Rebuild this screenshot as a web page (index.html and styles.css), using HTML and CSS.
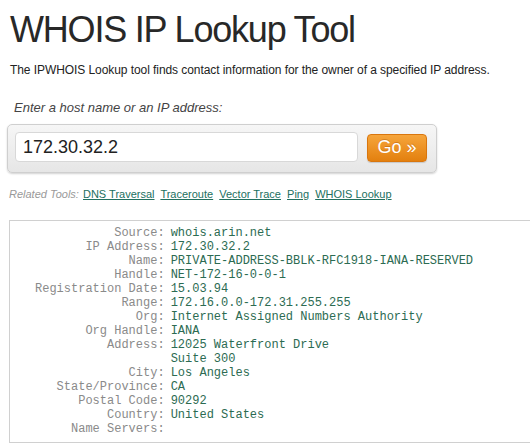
FILE: index.html
```html
<!DOCTYPE html>
<html>
<head>
<meta charset="utf-8">
<link rel="stylesheet" href="styles.css">
</head>
<body>
<h1 class="title">WHOIS IP Lookup Tool</h1>
<p class="desc">The IPWHOIS Lookup tool finds contact information for the owner of a specified IP address.</p>
<p class="prompt">Enter a host name or an IP address:</p>
<form class="search">
  <input class="search-input" type="text" value="172.30.32.2">
  <button class="go" type="button">Go »</button>
</form>
<div class="related">
  <span class="related-label">Related Tools:</span>
  <a href="#">DNS Traversal</a>
  <a href="#">Traceroute</a>
  <a href="#">Vector Trace</a>
  <a href="#">Ping</a>
  <a href="#">WHOIS Lookup</a>
</div>
<div class="result">
  <dl class="rows">
    <dt>Source:</dt><dd>whois.arin.net</dd>
    <dt>IP Address:</dt><dd>172.30.32.2</dd>
    <dt>Name:</dt><dd>PRIVATE-ADDRESS-BBLK-RFC1918-IANA-RESERVED</dd>
    <dt>Handle:</dt><dd>NET-172-16-0-0-1</dd>
    <dt>Registration Date:</dt><dd>15.03.94</dd>
    <dt>Range:</dt><dd>172.16.0.0-172.31.255.255</dd>
    <dt>Org:</dt><dd>Internet Assigned Numbers Authority</dd>
    <dt>Org Handle:</dt><dd>IANA</dd>
    <dt>Address:</dt><dd>12025 Waterfront Drive<br>Suite 300</dd>
    <dt>City:</dt><dd>Los Angeles</dd>
    <dt>State/Province:</dt><dd>CA</dd>
    <dt>Postal Code:</dt><dd>90292</dd>
    <dt>Country:</dt><dd>United States</dd>
    <dt>Name Servers:</dt><dd></dd>
  </dl>
</div>
</body>
</html>
```
FILE: styles.css
```css
html { overflow: hidden; background: #fff; }
body {
  margin: 0;
  font-family: "Liberation Sans", Arial, sans-serif;
  color: #222;
}
.title {
  margin: 10px 0 0 10px;
  font-size: 36px;
  line-height: 40px;
  font-weight: normal;
  letter-spacing: -1.2px;
  color: #282828;
}
.desc {
  margin: 12px 0 0 10px;
  font-size: 12px;
  line-height: 16px;
  letter-spacing: -0.07px;
  color: #222;
}
.prompt {
  margin: 22px 0 0 14px;
  font-size: 13px;
  line-height: 16px;
  font-style: italic;
  color: #444;
}
.search {
  margin: 8px 0 0 7px;
  display: inline-flex;
  align-items: center;
  gap: 9px;
  padding: 7px 9px 10px 7px;
  border: 1px solid #cfcfcf;
  border-radius: 5px;
  background: linear-gradient(#f6f6f6, #e6e6e6);
  box-shadow: 0 1px 2px rgba(0,0,0,0.18);
}
.search-input {
  box-sizing: border-box;
  width: 343px;
  height: 30px;
  margin: 0;
  padding: 0 7px;
  border: 1px solid #d8d8d8;
  border-radius: 4px;
  background: #fff;
  font-family: "Liberation Sans", Arial, sans-serif;
  font-size: 18px;
  color: #222;
}
.go {
  box-sizing: border-box;
  width: 60px;
  height: 28px;
  margin: 1px 0 0 0;
  padding: 0;
  border: 1px solid #d9760e;
  border-radius: 4px;
  background: linear-gradient(#f6a53b, #e3800f);
  font-family: "Liberation Sans", Arial, sans-serif;
  font-size: 18px;
  color: #fff;
  text-shadow: 0 -1px 0 rgba(150,70,0,0.35);
  box-shadow: 0 1px 1px rgba(0,0,0,0.15);
}
.related {
  margin: 14px 0 0 9px;
  font-size: 11px;
  line-height: 14px;
}
.related-label {
  font-style: italic;
  color: #999;
  margin-right: 1px;
}
.related a {
  color: #22705f;
  text-decoration: underline;
  margin-right: 3px;
}
.result {
  margin: 19px -20px 0 9px;
  border: 1px solid #d0d0d0;
  padding: 5px 0 6px 25px;
}
.rows {
  margin: 0;
  display: grid;
  grid-template-columns: max-content 1fr;
  column-gap: 6px;
  font-family: "Liberation Mono", "Courier New", monospace;
  font-size: 12px;
  line-height: 14px;
}
.rows dt {
  text-align: right;
  color: #8a8a8a;
}
.rows dd {
  margin: 0;
  color: #2c6b52;
  min-height: 14px;
}
```
